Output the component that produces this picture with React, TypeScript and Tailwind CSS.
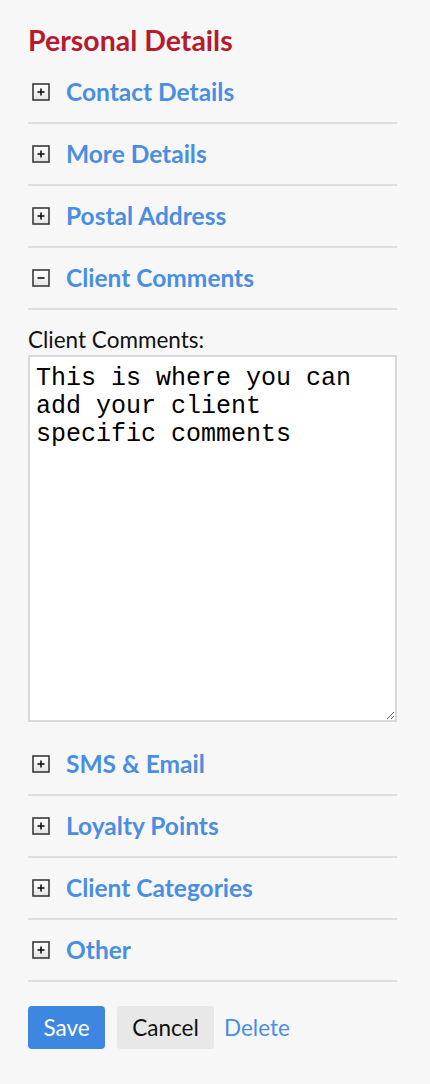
import React from "react";

function BoxIcon({ open }: { open?: boolean }) {
  return (
    <svg width="18" height="18" viewBox="0 0 18 18" className="shrink-0">
      <defs>
        <linearGradient id={open ? "gm" : "gp"} x1="0" y1="0" x2="0" y2="1">
          <stop offset="0" stopColor="#ffffff" />
          <stop offset="1" stopColor="#e4e4e4" />
        </linearGradient>
      </defs>
      <rect x="1" y="1" width="16" height="16" fill={`url(#${open ? "gm" : "gp"})`} stroke="#3a3a3a" strokeWidth="1.6" />
      <path d="M5.5 9h7" stroke="#111" strokeWidth="1.6" />
      {!open && <path d="M9 5.5v7" stroke="#111" strokeWidth="1.6" />}
    </svg>
  );
}

function Row({ label, open }: { label: string; open?: boolean }) {
  return (
    <div className="flex h-[62px] items-center gap-[16px] border-b-2 border-[#dedede] pl-[4px]">
      <BoxIcon open={open} />
      <span className="text-[24.5px] font-bold leading-none text-[#4a8ee2]">{label}</span>
    </div>
  );
}

export default function App() {
  return (
    <div
      className="min-h-[1084px] w-[430px] bg-[#f7f7f7] pl-[28px] pr-[33px] pt-[24px]"
      style={{ fontFamily: "Lato, 'Open Sans', sans-serif" }}
    >
      <h1 className="text-[28.5px] font-bold leading-[32px] text-[#b51b2c]">Personal Details</h1>
      <div className="mt-[6px]">
        <Row label="Contact Details" />
        <Row label="More Details" />
        <Row label="Postal Address" />
        <Row label="Client Comments" open />
      </div>
      <div className="pt-[17px]">
        <div className="text-[22.5px] leading-[26px] text-[#111]">Client Comments:</div>
        <textarea
          className="mt-[2px] block h-[367px] w-full resize-y border-2 border-[#d9d9d9] bg-white px-[6px] pb-[6px] pt-[8px] text-[25px] leading-[28px] text-black outline-none"
          style={{ fontFamily: "'Liberation Mono', 'Courier New', monospace" }}
          defaultValue={"This is where you can add your client specific comments"}
        />
      </div>
      <div className="mt-[12px]">
        <Row label="SMS & Email" />
        <Row label="Loyalty Points" />
        <Row label="Client Categories" />
        <Row label="Other" />
      </div>
      <div className="mt-[24px] flex items-center">
        <button className="h-[43px] w-[77px] rounded-[4px] bg-[#3d87e0] text-[22.5px] text-white">Save</button>
        <button className="ml-[12px] h-[43px] w-[97px] rounded-[4px] bg-[#e8e8e8] text-[22.5px] text-[#111]">Cancel</button>
        <button className="ml-[10px] text-[22.5px] text-[#4a8ee2]">Delete</button>
      </div>
    </div>
  );
}
